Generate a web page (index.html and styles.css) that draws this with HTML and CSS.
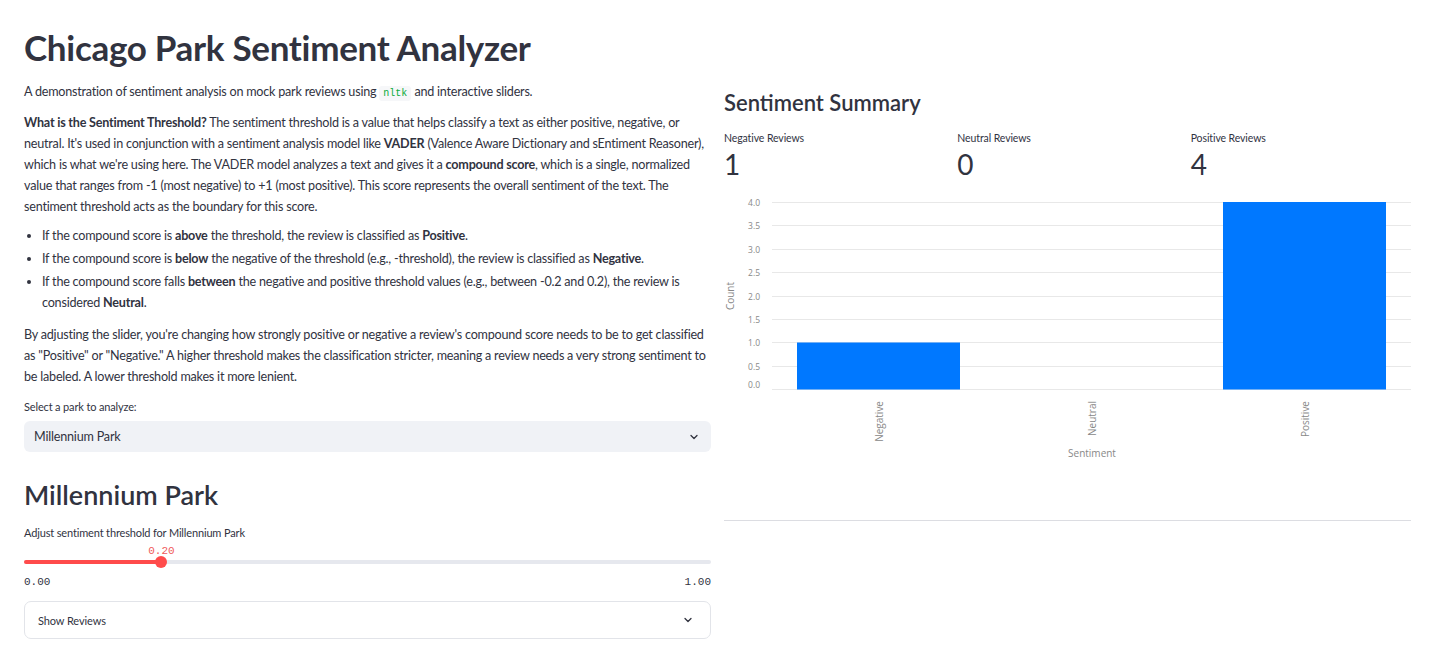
FILE: index.html
```html
<!DOCTYPE html>
<html lang="en">
<head>
    <meta charset="UTF-8">
    <meta name="viewport" content="width=device-width, initial-scale=1.0">
    <title>Chicago Park Sentiment Analyzer</title>
    <link rel="stylesheet" href="styles.css">
</head>
<body>
    <div class="app">
        <h1 class="title">Chicago Park Sentiment Analyzer</h1>

        <div class="columns">
            <div class="col">
                <p>A demonstration of sentiment analysis on mock park reviews using <code>nltk</code> and interactive sliders.</p>

                <p><strong>What is the Sentiment Threshold?</strong> The sentiment threshold is a value that helps classify a text as either positive, negative, or neutral. It's used in conjunction with a sentiment analysis model like <strong>VADER</strong> (Valence Aware Dictionary and sEntiment Reasoner), which is what we're using here. The VADER model analyzes a text and gives it a <strong>compound score</strong>, which is a single, normalized value that ranges from -1 (most negative) to +1 (most positive). This score represents the overall sentiment of the text. The sentiment threshold acts as the boundary for this score.</p>

                <ul>
                    <li>If the compound score is <strong>above</strong> the threshold, the review is classified as <strong>Positive</strong>.</li>
                    <li>If the compound score is <strong>below</strong> the negative of the threshold (e.g., -threshold), the review is classified as <strong>Negative</strong>.</li>
                    <li>If the compound score falls <strong>between</strong> the negative and positive threshold values (e.g., between -0.2 and 0.2), the review is considered <strong>Neutral</strong>.</li>
                </ul>

                <p>By adjusting the slider, you're changing how strongly positive or negative a review's compound score needs to be to get classified as "Positive" or "Negative." A higher threshold makes the classification stricter, meaning a review needs a very strong sentiment to be labeled. A lower threshold makes it more lenient.</p>

                <div class="field-label select-label">Select a park to analyze:</div>
                <div class="select">
                    <span>Millennium Park</span>
                    <svg class="chevron" width="12" height="12" viewBox="0 0 24 24"><path d="M6 9l6 6 6-6" fill="none" stroke="#31333f" stroke-width="2.6" stroke-linecap="round" stroke-linejoin="round"/></svg>
                </div>

                <h2 class="park-name">Millennium Park</h2>

                <div class="field-label slider-label">Adjust sentiment threshold for Millennium Park</div>
                <div class="slider">
                    <div class="slider-value-row">
                        <span class="slider-value" style="left: 20%;">0.20</span>
                    </div>
                    <div class="slider-track">
                        <div class="slider-fill" style="width: 20%;"></div>
                        <div class="slider-thumb" style="left: 20%;"></div>
                    </div>
                    <div class="slider-ends">
                        <span>0.00</span>
                        <span>1.00</span>
                    </div>
                </div>

                <div class="expander">
                    <span>Show Reviews</span>
                    <svg class="chevron" width="12" height="12" viewBox="0 0 24 24"><path d="M6 9l6 6 6-6" fill="none" stroke="#31333f" stroke-width="2.6" stroke-linecap="round" stroke-linejoin="round"/></svg>
                </div>
            </div>

            <div class="col">
                <h3 class="summary-title">Sentiment Summary</h3>

                <div class="metrics">
                    <div class="metric">
                        <div class="metric-label">Negative Reviews</div>
                        <div class="metric-value">1</div>
                    </div>
                    <div class="metric">
                        <div class="metric-label">Neutral Reviews</div>
                        <div class="metric-value">0</div>
                    </div>
                    <div class="metric">
                        <div class="metric-label">Positive Reviews</div>
                        <div class="metric-value">4</div>
                    </div>
                </div>

                <svg class="chart" width="687" height="275" viewBox="0 0 687 275">
                    <g stroke="#e8e8e8" stroke-width="1">
                        <line x1="48" y1="7.5" x2="687" y2="7.5"/>
                        <line x1="48" y1="30.5" x2="687" y2="30.5"/>
                        <line x1="48" y1="54.5" x2="687" y2="54.5"/>
                        <line x1="48" y1="77.5" x2="687" y2="77.5"/>
                        <line x1="48" y1="101.5" x2="687" y2="101.5"/>
                        <line x1="48" y1="124.5" x2="687" y2="124.5"/>
                        <line x1="48" y1="147.5" x2="687" y2="147.5"/>
                        <line x1="48" y1="171.5" x2="687" y2="171.5"/>
                        <line x1="48" y1="194.5" x2="687" y2="194.5"/>
                    </g>
                    <g class="tick" text-anchor="end">
                        <text x="36" y="11">4.0</text>
                        <text x="36" y="34">3.5</text>
                        <text x="36" y="58">3.0</text>
                        <text x="36" y="81">2.5</text>
                        <text x="36" y="105">2.0</text>
                        <text x="36" y="128">1.5</text>
                        <text x="36" y="151">1.0</text>
                        <text x="36" y="175">0.5</text>
                        <text x="36" y="193">0.0</text>
                    </g>
                    <rect x="73" y="147.5" width="163" height="47" fill="#0078ff"/>
                    <rect x="499" y="7" width="163" height="187.5" fill="#0078ff"/>
                    <g class="band-label" text-anchor="end">
                        <text transform="translate(158.5 206) rotate(-90)">Negative</text>
                        <text transform="translate(371.5 206) rotate(-90)">Neutral</text>
                        <text transform="translate(584.5 206) rotate(-90)">Positive</text>
                    </g>
                    <text class="axis-title" text-anchor="middle" transform="translate(10 101) rotate(-90)">Count</text>
                    <text class="axis-title" x="368" y="262" text-anchor="middle">Sentiment</text>
                </svg>

                <hr class="divider">
            </div>
        </div>
    </div>
</body>
</html>
```

FILE: styles.css
```css
body {
    margin: 0;
    font-family: Lato, "Noto Sans", sans-serif;
    color: #31333f;
    background: #ffffff;
}

.app {
    padding: 24px 29px 0 24px;
}

.title {
    margin: 0 0 11px;
    font-size: 35px;
    line-height: 46px;
    font-weight: 700;
    letter-spacing: -0.3px;
}

.columns {
    display: flex;
    gap: 13px;
}

.col {
    flex: 1;
    min-width: 0;
}

p {
    margin: 0 0 8px;
    font-size: 12.6px;
    line-height: 21px;
    letter-spacing: -0.22px;
}

strong {
    font-weight: 700;
}

code {
    font-family: "Liberation Mono", monospace;
    font-size: 10px;
    letter-spacing: 0;
    color: #09ab3b;
    background: #f6f7f9;
    padding: 2px 4px;
    border-radius: 3px;
}

ul {
    margin: 0 0 11px;
    padding-left: 18px;
}

li {
    font-size: 12.6px;
    line-height: 21px;
    letter-spacing: -0.22px;
    margin-bottom: 2px;
}

.field-label {
    font-size: 11px;
    line-height: 16px;
    letter-spacing: -0.15px;
    margin-bottom: 6px;
}

.select-label {
    margin-top: 12px;
}

.select {
    display: flex;
    align-items: center;
    justify-content: space-between;
    height: 31px;
    padding: 0 11px 0 10px;
    background: #f0f2f6;
    border-radius: 6px;
    font-size: 12.6px;
    letter-spacing: -0.2px;
}

.park-name {
    margin: 25px 0 12px;
    font-size: 27px;
    line-height: 36px;
    font-weight: 600;
}

.slider-label {
    margin-bottom: 4px;
}

.slider {
    margin-bottom: 13px;
}

.slider-value-row {
    position: relative;
    height: 15px;
}

.slider-value {
    position: absolute;
    top: 0;
    transform: translateX(-50%);
    font-family: "Liberation Mono", monospace;
    font-size: 11px;
    color: #f05a5a;
}

.slider-track {
    position: relative;
    height: 4px;
    margin: 0 0 12px;
    background: #e6e8ee;
    border-radius: 2px;
}

.slider-fill {
    height: 4px;
    background: #ff4b4b;
    border-radius: 2px;
}

.slider-thumb {
    position: absolute;
    top: -4px;
    width: 12px;
    height: 12px;
    margin-left: -6px;
    background: #ff4b4b;
    border-radius: 50%;
}

.slider-ends {
    display: flex;
    justify-content: space-between;
    font-family: "Liberation Mono", monospace;
    font-size: 11px;
    color: #31333f;
}

.expander {
    display: flex;
    align-items: center;
    justify-content: space-between;
    height: 36px;
    padding: 0 16px 0 13px;
    border: 1px solid #e2e4e9;
    border-radius: 7px;
    font-size: 11px;
    letter-spacing: -0.1px;
}

.summary-title {
    margin: 8px 0 13px;
    font-size: 22px;
    line-height: 28px;
    font-weight: 600;
}

.metrics {
    display: flex;
    gap: 13px;
}

.metric {
    flex: 1;
}

.metric-label {
    font-size: 10.5px;
    line-height: 16px;
    letter-spacing: -0.1px;
}

.metric-value {
    font-size: 28px;
    line-height: 36px;
    font-weight: 400;
}

.chart {
    display: block;
    margin-top: 13px;
}

.tick {
    font-family: "Open Sans", sans-serif;
    font-size: 8.5px;
    fill: #888888;
}

.band-label {
    font-family: "Open Sans", sans-serif;
    font-size: 10px;
    fill: #888888;
}

.axis-title {
    font-family: "Open Sans", sans-serif;
    font-size: 10px;
    fill: #888888;
}

.divider {
    margin: 50px 0 0;
    border: none;
    border-top: 1px solid #dcdde2;
}
```
